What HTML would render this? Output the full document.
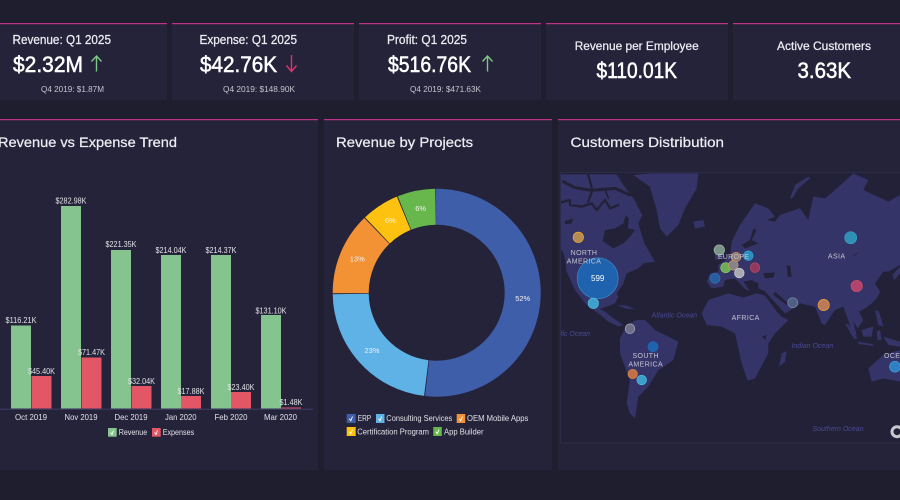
<!DOCTYPE html>
<html>
<head>
<meta charset="utf-8">
<title>Dashboard</title>
<style>
html,body{margin:0;padding:0;background:#1f1e2f;width:900px;height:500px;overflow:hidden}
svg{display:block;font-family:"Liberation Sans",sans-serif}
#page{filter:blur(.35px)}
.t{fill:#ececf2;stroke:#ececf2;stroke-width:.25}
.b{fill:#fff;stroke:#fff;stroke-width:.55}
.s{fill:#c4c4cc}
.v{fill:#e0e0e6;font-size:8px}
.ck{fill:none;stroke:#fff;stroke-width:.9}
.m{fill:#c4c4d0;font-size:7px;text-anchor:middle}
.o{fill:#4a4a94;font-size:7px;font-style:italic;text-anchor:middle}
.bub{stroke-width:.7}
.ch{fill:none;stroke:#232137;stroke-linejoin:round;stroke-linecap:round}
</style>
</head>
<body>
<svg id="page" width="900" height="500" viewBox="0 0 900 500" xmlns="http://www.w3.org/2000/svg">
<rect width="900" height="500" fill="#1f1e2f"/>

<!-- KPI cards -->
<g fill="#25233a">
<rect x="-5" y="23" width="172" height="77"/>
<rect x="172" y="23" width="182" height="77"/>
<rect x="359" y="23" width="182" height="77"/>
<rect x="546" y="23" width="182" height="77"/>
<rect x="733" y="23" width="172" height="77"/>
<rect x="-5" y="119" width="323" height="351"/>
<rect x="324" y="119" width="228" height="351"/>
<rect x="558" y="119" width="347" height="351"/>
</g>
<g fill="#bd3389">
<rect x="0" y="23" width="167" height="1.2"/>
<rect x="172" y="23" width="182" height="1.2"/>
<rect x="359" y="23" width="182" height="1.2"/>
<rect x="546" y="23" width="182" height="1.2"/>
<rect x="733" y="23" width="167" height="1.2"/>
<rect x="0" y="119" width="318" height="1.2"/>
<rect x="324" y="119" width="228" height="1.2"/>
<rect x="558" y="119" width="342" height="1.2"/>
</g>

<text class="t" x="12.5" y="44" font-size="12.5" textLength="98.5" lengthAdjust="spacingAndGlyphs">Revenue: Q1 2025</text>
<text class="b" x="13" y="72" font-size="22.5" textLength="70" lengthAdjust="spacingAndGlyphs">$2.32M</text>
<path d="M96.5 71.5V56M91.5 61.5L96.5 56L101.5 61.5" fill="none" stroke="#7cc886" stroke-width="1.4"/>
<text class="s" x="41" y="92" font-size="8.5" textLength="63" lengthAdjust="spacingAndGlyphs">Q4 2019: $1.87M</text>

<text class="t" x="199.5" y="44" font-size="12.5" textLength="97.5" lengthAdjust="spacingAndGlyphs">Expense: Q1 2025</text>
<text class="b" x="200" y="72" font-size="22.5" textLength="77" lengthAdjust="spacingAndGlyphs">$42.76K</text>
<path d="M291.5 55V71M286.5 65.5L291.5 71.5L296.5 65.5" fill="none" stroke="#e0336e" stroke-width="1.4"/>
<text class="s" x="223" y="92" font-size="8.5" textLength="72" lengthAdjust="spacingAndGlyphs">Q4 2019: $148.90K</text>

<text class="t" x="387" y="44" font-size="12.5" textLength="80" lengthAdjust="spacingAndGlyphs">Profit: Q1 2025</text>
<text class="b" x="388" y="72" font-size="22.5" textLength="83" lengthAdjust="spacingAndGlyphs">$516.76K</text>
<path d="M487.5 71.5V56M482.5 61.5L487.5 56L492.5 61.5" fill="none" stroke="#7cc886" stroke-width="1.4"/>
<text class="s" x="410" y="92" font-size="8.5" textLength="71" lengthAdjust="spacingAndGlyphs">Q4 2019: $471.63K</text>

<text class="t" x="574.7" y="50" font-size="12" textLength="124" lengthAdjust="spacingAndGlyphs">Revenue per Employee</text>
<text class="b" x="596.5" y="78" font-size="22.5" textLength="80.5" lengthAdjust="spacingAndGlyphs">$110.01K</text>
<text class="t" x="777" y="50" font-size="12" textLength="94" lengthAdjust="spacingAndGlyphs">Active Customers</text>
<text class="b" x="797.5" y="78" font-size="22.5" textLength="53.5" lengthAdjust="spacingAndGlyphs">3.63K</text>

<text class="t" x="-2" y="147" font-size="14" textLength="179" lengthAdjust="spacingAndGlyphs">Revenue vs Expense Trend</text>
<text class="t" x="336" y="147" font-size="14" textLength="137" lengthAdjust="spacingAndGlyphs">Revenue by Projects</text>
<text class="t" x="570.5" y="147" font-size="14" textLength="153.5" lengthAdjust="spacingAndGlyphs">Customers Distribution</text>

<!-- Bar chart -->
<g fill="#86c48f">
<rect x="11" y="325.5" width="20" height="83"/>
<rect x="61" y="206" width="20" height="202.5"/>
<rect x="111" y="250" width="20" height="158.5"/>
<rect x="161" y="255" width="20" height="153.5"/>
<rect x="211" y="255" width="20" height="153.5"/>
<rect x="261" y="315" width="20" height="93.5"/>
</g>
<g fill="#e25666">
<rect x="31.5" y="376" width="20" height="32.5"/>
<rect x="81.5" y="357.5" width="20" height="51"/>
<rect x="131.5" y="386" width="20" height="22.5"/>
<rect x="181" y="396" width="20" height="12.5"/>
<rect x="231" y="392" width="20" height="16.5"/>
<rect x="281" y="407.5" width="20" height="1"/>
</g>
<rect x="0" y="408.7" width="313" height="1" fill="#3f3d68"/>
<g class="v">
<text x="5.5" y="323" textLength="31" lengthAdjust="spacingAndGlyphs">$116.21K</text>
<text x="55.5" y="203.5" textLength="31" lengthAdjust="spacingAndGlyphs">$282.98K</text>
<text x="105.5" y="247" textLength="31" lengthAdjust="spacingAndGlyphs">$221.35K</text>
<text x="155.5" y="253" textLength="31" lengthAdjust="spacingAndGlyphs">$214.04K</text>
<text x="205.5" y="253" textLength="31" lengthAdjust="spacingAndGlyphs">$214.37K</text>
<text x="255.5" y="313.5" textLength="31" lengthAdjust="spacingAndGlyphs">$131.10K</text>
<text x="28" y="374" textLength="27" lengthAdjust="spacingAndGlyphs">$45.40K</text>
<text x="78" y="355" textLength="27" lengthAdjust="spacingAndGlyphs">$71.47K</text>
<text x="128" y="384" textLength="27" lengthAdjust="spacingAndGlyphs">$32.04K</text>
<text x="177.5" y="394" textLength="27" lengthAdjust="spacingAndGlyphs">$17.88K</text>
<text x="227.5" y="390" textLength="27" lengthAdjust="spacingAndGlyphs">$23.40K</text>
<text x="279.5" y="405" textLength="23" lengthAdjust="spacingAndGlyphs">$1.48K</text>
<text x="15" y="420" textLength="32" lengthAdjust="spacingAndGlyphs">Oct 2019</text>
<text x="64.5" y="420" textLength="33" lengthAdjust="spacingAndGlyphs">Nov 2019</text>
<text x="114.5" y="420" textLength="33" lengthAdjust="spacingAndGlyphs">Dec 2019</text>
<text x="165" y="420" textLength="31.5" lengthAdjust="spacingAndGlyphs">Jan 2020</text>
<text x="214.5" y="420" textLength="33" lengthAdjust="spacingAndGlyphs">Feb 2020</text>
<text x="264" y="420" textLength="33" lengthAdjust="spacingAndGlyphs">Mar 2020</text>
<text x="118.7" y="435" textLength="28.5" lengthAdjust="spacingAndGlyphs">Revenue</text>
<text x="162.7" y="435" textLength="31.5" lengthAdjust="spacingAndGlyphs">Expenses</text>
</g>
<rect x="108" y="428" width="8.7" height="8.7" fill="#86c48f"/>
<path class="ck" d="M110.5 432.5L112 434.5L113.5 430.5"/>
<rect x="152" y="428" width="8.7" height="8.7" fill="#e25666"/>
<path class="ck" d="M154.5 432.5L156 434.5L157.5 430.5"/>

<!-- Donut -->
<g fill="none" stroke-width="36" transform="rotate(-90 436.7 292.7)">
<circle cx="436.7" cy="292.7" r="86" pathLength="100" stroke="#3f5ea9" stroke-dasharray="51.85 48.15"/>
<circle cx="436.7" cy="292.7" r="86" pathLength="100" stroke="#5fb2e6" stroke-dasharray="22.85 77.15" stroke-dashoffset="-52"/>
<circle cx="436.7" cy="292.7" r="86" pathLength="100" stroke="#f39234" stroke-dasharray="12.85 87.15" stroke-dashoffset="-75"/>
<circle cx="436.7" cy="292.7" r="86" pathLength="100" stroke="#fdc20f" stroke-dasharray="5.85 94.15" stroke-dashoffset="-88"/>
<circle cx="436.7" cy="292.7" r="86" pathLength="100" stroke="#68b74c" stroke-dasharray="5.9 94.1" stroke-dashoffset="-94"/>
</g>
<g fill="#f2f2f2" font-size="7.5" text-anchor="middle">
<text x="522.7" y="301">52%</text>
<text x="372" y="353">23%</text>
<text x="357.3" y="261.5">13%</text>
<text x="390.3" y="223">6%</text>
<text x="420.7" y="211">6%</text>
</g>
<rect x="346.7" y="414" width="9" height="9" fill="#3f5ea9"/>
<path class="ck" d="M349.3 418.7L350.8 420.7L352.5 416.5"/>
<rect x="376" y="414" width="8.5" height="9" fill="#5fb2e6"/>
<path class="ck" d="M378.5 418.7L380 420.7L381.7 416.5"/>
<rect x="456.7" y="414" width="8.5" height="9" fill="#f39234"/>
<path class="ck" d="M459.2 418.7L460.7 420.7L462.4 416.5"/>
<rect x="346.7" y="427" width="9" height="9" fill="#fdc20f"/>
<path class="ck" d="M349.3 431.7L350.8 433.7L352.5 429.5"/>
<rect x="433.3" y="427" width="8.5" height="9" fill="#68b74c"/>
<path class="ck" d="M435.8 431.7L437.3 433.7L439 429.5"/>
<g class="v">
<text x="357.7" y="421" textLength="13.5" lengthAdjust="spacingAndGlyphs">ERP</text>
<text x="386.3" y="421" textLength="66" lengthAdjust="spacingAndGlyphs">Consulting Services</text>
<text x="467" y="421" textLength="61.3" lengthAdjust="spacingAndGlyphs">OEM Mobile Apps</text>
<text x="357.3" y="434.3" textLength="71.7" lengthAdjust="spacingAndGlyphs">Certification Program</text>
<text x="444" y="434.3" textLength="39.5" lengthAdjust="spacingAndGlyphs">App Builder</text>
</g>

<!-- Map -->
<rect x="560.5" y="172.5" width="345" height="270.5" fill="#232137" stroke="#2d2b4a" stroke-width="1"/>
<svg x="561" y="173" width="339" height="270" viewBox="561 173 339 270">
<g transform="translate(555 165) scale(.33333)" fill="#353468">
<!-- North America -->
<path d="M17 28L185 28L205 60L235 100L262 150L250 175L268 235L300 290L265 295L250 310L215 325L205 355L185 385L190 395L180 415L155 425L135 432L150 440L175 460L205 480L190 484L160 470L130 445L95 420L60 375L35 320L28 270L17 250Z"/>
<!-- Cuba -->
<path d="M185 420L215 422L240 433L210 430Z"/>
<!-- Greenland / Iceland -->
<path d="M235 30L290 25L430 25L425 70L390 130L370 180L335 215L315 190L305 135L285 65Z"/>
<path d="M415 170L445 165L450 185L420 190Z"/>
<!-- UK -->
<path d="M480 245L500 238L510 280L480 285Z"/>
<!-- Eurasia -->
<path d="M635 385L628 378L610 370L610 355L590 345L565 350L585 378L570 372L540 340L510 345L505 365L470 370L455 350L465 325L490 320L490 300L525 275L530 230L555 180L600 115L640 130L660 155L635 165L660 170L675 150L735 130L760 165L775 95L810 100L840 75L895 25L940 45L925 75L1000 110L1035 90L1035 300L1000 320L985 320L960 355L975 380L965 400L950 415L930 430L912 440L925 465L908 490L893 465L905 510L895 510L878 460L865 425L840 435L810 480L800 475L780 425L735 415L725 425L690 445Z"/>
<path d="M705 100L720 60L760 35L765 40L730 70L712 100Z"/>
<!-- Japan and SE Asia -->
<path d="M1012 330L1035 305L1035 325L1018 345Z"/>
<path d="M870 475L880 478L907 520L897 522Z"/>
<path d="M920 495L955 485L950 515L925 515Z"/>
<path d="M910 530L955 538L955 543L910 537Z"/>
<path d="M960 435L972 440L985 485L970 480Z"/>
<path d="M965 500L975 495L980 525L968 525Z"/>
<path d="M985 515L1035 530L1035 545L1000 540Z"/>
<!-- Africa -->
<path d="M440 445L460 405L520 385L565 398L605 385L630 392L665 440L680 455L700 465L660 505L640 535L640 565L600 640L578 647L560 595L540 505L500 485L455 480Z"/>
<path d="M672 605L680 565L695 558L690 590Z"/>
<!-- South America -->
<path d="M195 520L215 480L245 465L270 465L300 495L320 505L370 530L355 585L310 615L280 665L250 695L240 760L225 745L215 715L225 645L195 565Z"/>
<!-- Australia -->
<path d="M940 610L985 570L1035 555L1035 650L985 640L950 650Z"/>
</g>
<g transform="translate(555 165) scale(.33333)" fill="#232137">
<!-- Arctic channels -->
<path class="ch" stroke-width="7" d="M17 112L45 105L45 120L80 125L110 115L125 135L150 105L165 130L190 120"/>
<path class="ch" stroke-width="9" d="M25 50L60 68L110 76L180 70L225 90"/>
<path class="ch" stroke-width="7" d="M100 30L112 75L100 110"/>
<path class="ch" stroke-width="5" d="M150 72L160 100"/>
<!-- Hudson Bay -->
<path d="M150 195L180 190L205 175L212 150L222 160L218 190L240 195L225 215L205 235L175 250L143 228Z"/>
<!-- Seas -->
<path d="M595 190L605 195L590 225L610 235L570 250L560 240L585 225Z"/>
<path d="M625 325L660 322L655 338L630 340Z"/>
<path d="M695 300L706 303L710 335L698 335Z"/>
<path d="M30 168L55 160L50 175L30 178Z"/>
<path d="M660 380L700 415L695 420L655 390Z"/>
<path d="M915 245L905 268L890 275L908 262Z"/>
<path d="M620 515L635 510L632 525Z"/>
</g>
<circle cx="578.3" cy="237.3" r="5.2" class="bub" fill="#b58a55" stroke="#f3b02c"/>
<circle cx="597.7" cy="278.3" r="20.5" class="bub" fill="#1f62ad" stroke="#3a8dc8"/>
<circle cx="593.3" cy="303.3" r="5.2" class="bub" fill="#3d9fcb" stroke="#52c0e0"/>
<circle cx="719.3" cy="250" r="5.2" class="bub" fill="#7a9488" stroke="#a0b8ac"/>
<circle cx="736" cy="257" r="4.8" class="bub" fill="#8a7a78" stroke="#d68a4a"/>
<circle cx="748.3" cy="255.7" r="4.8" class="bub" fill="#2a8ec0" stroke="#35a0d0"/>
<circle cx="755" cy="267.7" r="4.8" class="bub" fill="#8f3a5e" stroke="#b84a60"/>
<circle cx="725.7" cy="267.7" r="5" class="bub" fill="#6fae58" stroke="#8ac86a"/>
<circle cx="733.3" cy="265.3" r="4.8" class="bub" fill="#84848c" stroke="#d89a50"/>
<circle cx="739.3" cy="273" r="4.8" class="bub" fill="#a9a9b4" stroke="#d5d5dc"/>
<circle cx="715" cy="278.3" r="5" class="bub" fill="#2a5f9f" stroke="#2f70b0"/>
<circle cx="850.7" cy="237.7" r="6" class="bub" fill="#2f8fb5" stroke="#38a0c0"/>
<circle cx="856.7" cy="286" r="5.7" class="bub" fill="#b3446f" stroke="#d05060"/>
<circle cx="823.7" cy="305" r="5.6" class="bub" fill="#b97a5c" stroke="#f0a030"/>
<circle cx="792.7" cy="302.7" r="5" class="bub" fill="#4f5f82" stroke="#7a88a8"/>
<circle cx="630" cy="328.7" r="4.8" class="bub" fill="#6f7088" stroke="#a8a8b8"/>
<circle cx="653" cy="346.7" r="5" class="bub" fill="#1f62ad" stroke="#2468b5"/>
<circle cx="632.7" cy="374" r="4.7" class="bub" fill="#c2704a" stroke="#d88840"/>
<circle cx="641.7" cy="380" r="4.8" class="bub" fill="#3d9fcb" stroke="#52c0e0"/>
<circle cx="895" cy="366.7" r="5.4" class="bub" fill="#2f7fc5" stroke="#40a0e0"/>
<circle cx="897" cy="431.7" r="5" fill="none" stroke="#c8c8d0" stroke-width="3"/>
<text class="m" x="584" y="255" letter-spacing=".4">NORTH</text>
<text class="m" x="584" y="263.5" letter-spacing=".4">AMERICA</text>
<text x="597.7" y="281" fill="#fff" font-size="8" text-anchor="middle">599</text>
<text class="m" x="733.5" y="259.2" letter-spacing=".3">EUROPE</text>
<text class="m" x="836.7" y="258.5" letter-spacing=".4">ASIA</text>
<text class="m" x="745.7" y="320" letter-spacing=".4">AFRICA</text>
<text class="m" x="645.7" y="358.2" letter-spacing=".4">SOUTH</text>
<text class="m" x="645.7" y="366.7" letter-spacing=".4">AMERICA</text>
<text class="m" x="884" y="358.2" letter-spacing=".4" style="text-anchor:start">OCEANIA</text>
<text class="o" x="674.3" y="317.5">Atlantic Ocean</text>
<text class="o" x="590" y="336" style="text-anchor:end">Pacific Ocean</text>
<text class="o" x="812.3" y="347.8">Indian Ocean</text>
<text class="o" x="838" y="431.2">Southern Ocean</text>
</svg>
</svg>
</body>
</html>
